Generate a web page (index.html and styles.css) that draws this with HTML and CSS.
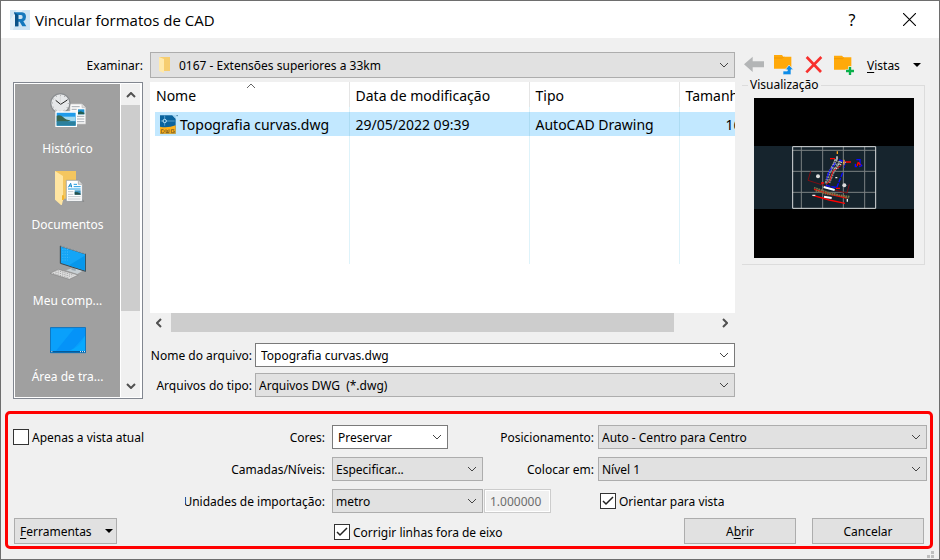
FILE: index.html
```html
<!DOCTYPE html>
<html lang="pt-BR">
<head>
    <meta charset="UTF-8">
    <meta name="viewport" content="width=device-width, initial-scale=1.0">
    <title>Vincular formatos de CAD</title>
    <link rel="stylesheet" href="styles.css">
</head>
<body>
<div class="dialog">
    <header class="titlebar">
        <svg class="app-icon" viewBox="0 0 60 60">
            <rect width="60" height="60" fill="#cfe4f3"/>
            <path d="M0 30L20 0h18L8 60H0z" fill="#e3f0f9"/>
            <path d="M12 7h24q12 1 12 14q0 9-8 13l9 15h-12l-8-14h-4v14H15V15z" fill="#1578bd"/>
            <path d="M25 15h8q5 0 5 6t-5 6h-8z" fill="#cfe4f3"/>
            <path d="M12 7l3 8v34l10 0V15z" fill="#0b5288"/>
        </svg>
        <h1>Vincular formatos de CAD</h1>
        <button class="help" aria-label="Ajuda">?</button>
        <button class="close" aria-label="Fechar">
            <svg viewBox="0 0 12 12"><path d="M0 0l12 12M12 0L0 12"/></svg>
        </button>
    </header>

    <main class="browser">
        <label class="look-label" for="folder">Examinar:</label>
        <select id="folder" class="combo folder-combo">
            <option>0167 - Extensões superiores a 33km</option>
        </select>
        <div class="toolbar">
            <button aria-label="Voltar">
                <svg viewBox="132 165 60 60"><path d="M132 193l26-23v14h34v18h-34v14z" fill="#b3b5b6"/></svg>
            </button>
            <button aria-label="Pasta acima">
                <svg viewBox="222 165 60 60">
                    <path d="M222 165h24l4 5h24v36h-52z" fill="#ffa90a"/>
                    <path d="M222 174h26l4-4" fill="none" stroke="#e99000" stroke-width="2"/>
                    <path d="M249 224v-11h13v-4h-6l11-14 13 14h-7v15z" fill="#0c8ce9" stroke="#f0f0f0" stroke-width="2"/>
                </svg>
            </button>
            <button aria-label="Excluir">
                <svg viewBox="312 165 60 60"><path d="M320 171l43 45M364 171l-45 46" stroke="#f8302d" stroke-width="8"/></svg>
            </button>
            <button aria-label="Nova pasta">
                <svg viewBox="405 165 60 60">
                    <path d="M405 167h24l4 5h24v37h-52z" fill="#ffa90a"/>
                    <path d="M405 176h26l4-4" fill="none" stroke="#e99000" stroke-width="2"/>
                    <path d="M453 199v26M440 213h26" stroke="#f0f0f0" stroke-width="11"/>
                    <path d="M453 201v24M441 213h24" stroke="#0ab04b" stroke-width="7"/>
                </svg>
            </button>
            <button class="views"><span><u>V</u>istas</span><span class="caret"></span></button>
        </div>

        <nav class="places">
            <ul>
                <li><button>
                    <svg viewBox="147 30 108 108">
                        <path d="M207 63h36l11 11v49h-47z" fill="#fafafa" stroke="#c9c9c9" stroke-width="2"/>
                        <path d="M243 63v11h11" fill="#ddd" stroke="#bbb" stroke-width="2"/>
                        <path d="M212 71h24M212 79h15M212 87h15M228 100h22M228 108h22M228 116h22" stroke="#a6adb3" stroke-width="3"/>
                        <path d="M231 79h19v15h-19z" fill="#1c8fd0"/>
                        <path d="M231 88l8-3 11 4v5h-19z" fill="#245d50"/>
                        <circle cx="178" cy="61" r="29" fill="#e6e8ea" stroke="#8a8d90" stroke-width="4"/>
                        <circle cx="178" cy="61" r="24" fill="none" stroke="#777" stroke-width="3" stroke-dasharray="2 10.5"/>
                        <path d="M164 52l15 12 20-13" fill="none" stroke="#222" stroke-width="3"/>
                        <path d="M178 39v26" stroke="#b9b9b9" stroke-width="1"/>
                        <path d="M165 87h61v43h-61z" fill="#1f9bea" stroke="#fff" stroke-width="4"/>
                        <path d="M168 101h55v14h-55z" fill="#a3d9ef"/>
                        <path d="M167 98q12-4 20 5t22 9l-9 4h-33z" fill="#3a6550"/>
                        <path d="M167 115h57v13h-57z" fill="#2c809d"/>
                    </svg>
                    Histórico
                </button></li>
                <li><button>
                    <svg viewBox="147 258 108 108">
                        <path d="M162 264h63v83h-42z" fill="#f4c65f"/>
                        <path d="M162 264l24 15v73l-4 16-20-18z" fill="#ffe5a1"/>
                        <path d="M183 337h6v14h-6z" fill="#f3b52d"/>
                        <path d="M200 356h50l-5-8z" fill="#848484"/>
                        <path d="M196 292h36l12 12v51h-48z" fill="#fff" stroke="#8c9499" stroke-width="2"/>
                        <path d="M232 292v12h12" fill="#ddd" stroke="#999" stroke-width="2"/>
                        <path d="M202 313l7-12 3 12M204 309h8" fill="none" stroke="#1186cc" stroke-width="3"/>
                        <path d="M218 304h10M218 311h21M201 318h38" stroke="#1d9be2" stroke-width="3"/>
                        <path d="M201 326h16M201 334h16M201 341h38M201 348h38" stroke="#a4abb0" stroke-width="2"/>
                        <path d="M221 322h18v13h-18z" fill="#3f94bd"/>
                        <path d="M221 327l9 1 9 4v3h-18z" fill="#244f4a"/>
                    </svg>
                    Documentos
                </button></li>
                <li><button>
                    <svg viewBox="147 36 108 108">
                        <path d="M195 112l22-8 28 9-16 10z" fill="#c8d0d4"/>
                        <path d="M214 100l10 4v10l-13-3z" fill="#9eabb2"/>
                        <path d="M178 39l76 24v52l-76-24z" fill="#14a5f6" stroke="#3a464d" stroke-width="3"/>
                        <path d="M179 39l74 23" stroke="#b9c6cd" stroke-width="2"/>
                        <path d="M204 97l47-29v44z" fill="#0797eb"/>
                        <path d="M184 49h20M184 57h22M184 65h20M184 73h22M184 81h16" stroke="#65c7fb" stroke-width="2" stroke-dasharray="3 4"/>
                        <path d="M147 121l25-12 60 17-27 13z" fill="#dedede" stroke="#858585" stroke-width="2"/>
                        <path d="M156 121l48 14M163 117l48 14M170 113l48 14" stroke="#8b8b8b" stroke-width="2" stroke-dasharray="4 3"/>
                    </svg>
                    Meu comp...
                </button></li>
                <li><button>
                    <svg viewBox="147 264 108 108">
                        <path d="M148 284h106v75H148z" fill="#0aa0fb" stroke="#0870bc" stroke-width="3"/>
                        <path d="M165 353l55-67h32v22l-40 45z" fill="#0593f8"/>
                        <path d="M205 353q35-12 47-45v45z" fill="#07a9ff"/>
                        <path d="M148 356h106" stroke="#075a98" stroke-width="4"/>
                        <path d="M151 356h3M237 356h3M243 356h3M249 356h3" stroke="#fff" stroke-width="3"/>
                    </svg>
                    Área de tra...
                </button></li>
            </ul>
            <div class="vscroll">
                <svg viewBox="0 0 10 6"><path d="M1 5l4-4 4 4"/></svg>
                <span class="thumb"></span>
                <svg viewBox="0 0 10 6"><path d="M1 1l4 4 4-4"/></svg>
            </div>
        </nav>

        <section class="files">
            <div class="file-list">
                <table>
                    <thead>
                        <tr>
                            <th class="col-name">Nome
                                <svg class="sort" viewBox="0 0 10 6"><path d="M1 5l4-4 4 4"/></svg>
                            </th>
                            <th class="col-date">Data de modificação</th>
                            <th class="col-type">Tipo</th>
                            <th class="col-size">Tamanho</th>
                        </tr>
                    </thead>
                    <tbody>
                        <tr class="spacer"><td></td><td></td><td></td><td></td></tr>
                        <tr class="selected">
                            <td>
                                <span class="file-name">
                                    <svg viewBox="0 0 54 57">
                                        <path d="M0 1h37l10 10v45H0z" fill="#0b649e"/>
                                        <path d="M37 1l10 10V1z" fill="#9ed0ed"/>
                                        <path d="M49 2h5" stroke="#4b86a8" stroke-width="3"/>
                                        <path d="M2 18h8M18 18h26M14 2v10M14 23v9" stroke="#79bde4" stroke-width="2"/>
                                        <circle cx="14" cy="18" r="5" fill="none" stroke="#c1e7fc" stroke-width="3"/>
                                        <path d="M0 35q23 5 47-4v25H0z" fill="#ffb11b"/>
                                        <path d="M4 44h6l3 3v3l-3 4H4zM18 43v10h9V43M22 45v8M43 44h-9v9h9v-5h-4" fill="none" stroke="#594b27" stroke-width="2"/>
                                    </svg>
                                    Topografia curvas.dwg
                                </span>
                            </td>
                            <td>29/05/2022 09:39</td>
                            <td>AutoCAD Drawing</td>
                            <td class="size">16 KB</td>
                        </tr>
                        <tr class="filler"><td></td><td></td><td></td><td></td></tr>
                    </tbody>
                </table>
            </div>
            <div class="hscroll">
                <svg viewBox="0 0 6 10"><path d="M5 1L1 5l4 4"/></svg>
                <span class="thumb"></span>
                <svg viewBox="0 0 6 10"><path d="M1 1l4 4-4 4"/></svg>
            </div>
            <div class="file-fields">
                <label for="filename">Nome do arquivo:</label>
                <select id="filename" class="combo editable">
                    <option>Topografia curvas.dwg</option>
                </select>
                <label for="filetype">Arquivos do tipo:</label>
                <select id="filetype" class="combo">
                    <option>Arquivos DWG&nbsp; (*.dwg)</option>
                </select>
            </div>
        </section>

        <fieldset class="preview">
            <legend>Visualização</legend>
            <svg viewBox="42 54 480 480">
                <path d="M42 54h480v480H42z" fill="#000"/>
                <path d="M42 198h480v189H42z" fill="#16242d"/>
                <path d="M184 199v187M248 199v187M310 199v187M374 199v187M157 211h250M157 274h250M157 337h250" stroke="#7b8183" stroke-width="3"/>
                <path d="M158 200h249v185H158z" fill="none" stroke="#d9dcdd" stroke-width="3"/>
                <path d="M212 274l-8 27 50 16M328 313l-7 26-35-8" fill="none" stroke="#7c0d12" stroke-width="3"/>
                <path d="M289 238l-22 42-10 32M303 242l-22 32-14 34" fill="none" stroke="#8d9192" stroke-width="8" stroke-dasharray="6 2"/>
                <path d="M286 249l-20 27-6 22M308 278l-18 45-35-7M297 240l18 5-2 18" fill="none" stroke="#0a0aff" stroke-width="4" stroke-dasharray="14 3"/>
                <path d="M304 256l-25 17-10 31-10 8" fill="none" stroke="#f01010" stroke-width="3"/>
                <path d="M270 236h15M316 246h17M243 309h9M288 325h12M218 346l50 14 47 10M222 328l46 14 52 12" fill="none" stroke="#f00" stroke-width="4"/>
                <path d="M282 240l24 8 12-1M279 252l26 2M274 264l22 2" fill="none" stroke="#d2d2d2" stroke-width="3" stroke-dasharray="4 3"/>
                <path d="M222 323l42 14 32 8 34 5M227 332l30 9 42 5 27 8" fill="none" stroke="#7c7547" stroke-width="5" stroke-dasharray="5 2"/>
                <path d="M251 321l33 9M252 350l23 4" stroke="#fff" stroke-width="6"/>
                <path d="M217 346h9M322 357v8M291 239v-10M286 293h6" stroke="#eee" stroke-width="4"/>
                <circle cx="234" cy="289" r="6" fill="#ddd"/>
                <circle cx="313" cy="316" r="6" fill="#ddd"/>
                <path d="M292 214v8M312 239v15" stroke="#ffa51b" stroke-width="4"/>
                <path d="M349 239h11v12l5 6-8 3M346 251v9h5" fill="none" stroke="#0a0aff" stroke-width="4"/>
                <path d="M355 246l-4 12M356 247l5 9" stroke="#f00" stroke-width="4"/>
            </svg>
        </fieldset>
    </main>

    <section class="options">
        <label class="check"><input type="checkbox">Apenas a vista atual</label>
        <label class="field-label" for="colors">Cores:</label>
        <select id="colors" class="combo editable colors"><option>Preservar</option></select>
        <label class="field-label right" for="position">Posicionamento:</label>
        <select id="position" class="combo"><option>Auto - Centro para Centro</option></select>

        <label class="field-label layers-label" for="layers">Camadas/Níveis:</label>
        <select id="layers" class="combo"><option>Especificar...</option></select>
        <label class="field-label right" for="level">Colocar em:</label>
        <select id="level" class="combo"><option>Nível 1</option></select>

        <label class="field-label units-label" for="units">Unidades de importação:</label>
        <div class="units">
            <select id="units" class="combo"><option>metro</option></select>
            <input type="text" class="factor" value="1.000000" aria-label="Fator" disabled>
        </div>
        <label class="check inset"><input type="checkbox" checked>Orientar para vista</label>

        <button class="btn tools"><span><u>F</u>erramentas</span><span class="caret"></span></button>
        <label class="check inset fix-lines"><input type="checkbox" checked>Corrigir linhas fora de eixo</label>
        <div class="actions">
            <button class="btn"><span>A<u>b</u>rir</span></button>
            <button class="btn">Cancelar</button>
        </div>
    </section>
    <span class="grip"></span>
</div>
</body>
</html>
```
FILE: styles.css
```css
* {
    box-sizing: border-box;
    margin: 0;
    padding: 0;
}

body {
    background: #f0f0f0;
    color: #000;
    font-family: "Noto Sans", "DejaVu Sans Condensed", sans-serif;
    font-size: 12px;
}

button, select, input {
    font: inherit;
    color: inherit;
}

button {
    border: 0;
    background: none;
}

svg {
    display: block;
}

u {
    text-underline-offset: 2px;
}

.dialog {
    position: relative;
    min-height: 100vh;
    border: 1px solid #6e6e6e;
}

/* title bar */
.titlebar {
    display: flex;
    align-items: center;
    height: 37px;
    padding: 0 23px 0 9px;
    background: #fff;
}

.app-icon {
    width: 20px;
    height: 20px;
}

.titlebar h1 {
    flex: 1;
    margin-left: 5px;
    font: 15px "Open Sans", sans-serif;
}

.help {
    width: 20px;
    font: 16px "Noto Sans", sans-serif;
}

.close {
    margin-left: 41px;
}

.close svg {
    width: 13px;
    height: 13px;
    stroke: #000;
}

/* file browser */
.browser {
    display: grid;
    grid-template-columns: 130px minmax(0, 1fr) 183px;
    grid-template-rows: 26px auto;
    gap: 4px 7px;
    padding: 14px 14px 12px 12px;
}

.look-label {
    align-self: center;
    text-align: right;
}

.combo {
    appearance: none;
    width: 100%;
    height: 24px;
    padding: 0 24px 0 3px;
    border: 1px solid #adadad;
    border-radius: 0;
    background: #e1e1e1 url("data:image/svg+xml,%3Csvg xmlns='http://www.w3.org/2000/svg' width='10' height='6'%3E%3Cpath d='M1 1l4 4 4-4' fill='none' stroke='%23444'/%3E%3C/svg%3E") no-repeat right 5px center;
}

.combo.editable {
    padding-left: 5px;
    border-color: #7a7a7a;
    background-color: #fff;
}

.folder-combo {
    height: 26px;
    padding-left: 28px;
    background-image:
        url("data:image/svg+xml,%3Csvg xmlns='http://www.w3.org/2000/svg' width='10' height='6'%3E%3Cpath d='M1 1l4 4 4-4' fill='none' stroke='%23444'/%3E%3C/svg%3E"),
        url("data:image/svg+xml,%3Csvg xmlns='http://www.w3.org/2000/svg' width='12' height='16'%3E%3Cpath d='M0 0h11v14H5z' fill='%23f6cd70'/%3E%3Cpath d='M0 0l5 2v14l-5-2z' fill='%23ffe9ac'/%3E%3C/svg%3E");
    background-position: right 5px center, 8px center;
    background-repeat: no-repeat;
}

.toolbar {
    display: flex;
    align-items: center;
    gap: 10px;
    padding-left: 2px;
}

.toolbar svg {
    width: 20px;
    height: 20px;
}

.toolbar .views {
    display: flex;
    flex: 1;
    align-items: center;
    justify-content: space-between;
    padding: 0 4px 0 3px;
}

.caret {
    border: 4px solid transparent;
    border-top-color: #000;
    border-bottom-width: 0;
}

/* places bar */
.places {
    display: flex;
    gap: 1px;
    padding: 1px 2px 1px 1px;
    border: 1px solid #828790;
    background: #fff;
}

.places ul {
    flex: 1;
    background: #a0a0a0;
    list-style: none;
}

.places button {
    width: 100%;
    height: 76px;
    padding-top: 6px;
    color: #fff;
    line-height: 18px;
}

.places button svg {
    width: 36px;
    height: 36px;
    margin: 0 auto 11px;
}

.vscroll, .hscroll {
    display: flex;
    align-items: center;
    background: #f0f0f0;
}

.vscroll svg, .hscroll svg {
    fill: none;
    stroke: #505050;
    stroke-width: 2;
}

.thumb {
    background: #cdcdcd;
}

.vscroll {
    flex-direction: column;
    width: 19px;
    padding: 8px 0;
}

.vscroll svg {
    width: 10px;
    height: 6px;
}

.vscroll .thumb {
    width: 100%;
    height: 206px;
    margin: 7px 0 auto;
}

/* file list */
.file-list {
    height: 231px;
    padding-left: 5px;
    overflow: hidden;
    background: #fff;
}

.file-list table {
    width: 625px;
    table-layout: fixed;
    border-collapse: collapse;
    font: 14px "Noto Sans", sans-serif;
    white-space: nowrap;
}

.file-list th, .file-list td {
    padding: 0 6px;
    border-left: 1px solid #def3fa;
    text-align: left;
    font-weight: normal;
}

.file-list th {
    height: 25px;
    padding-top: 2px;
    border-color: #e5e5e5;
}

.file-list th:first-child, .file-list td:first-child {
    padding-left: 1px;
    border-left: 0;
}

.col-name {
    position: relative;
    width: 194px;
}

.col-date {
    width: 180px;
}

.col-type {
    width: 150px;
}

.sort {
    position: absolute;
    top: 1px;
    left: 50%;
    width: 10px;
    height: 6px;
    margin-left: -6px;
    fill: none;
    stroke: #666;
}

.spacer td {
    height: 5px;
}

.selected td {
    height: 24px;
    border-color: #addcf3;
    background: #c2e8ff;
}

.file-list .size {
    padding-left: 46px;
}

.file-name {
    display: flex;
    align-items: center;
    gap: 2px;
    padding-left: 4px;
}

.file-name svg {
    width: 18px;
    height: 19px;
}

.filler td {
    height: 128px;
}

.hscroll {
    height: 19px;
    padding: 0 7px 0 6px;
}

.hscroll svg {
    width: 6px;
    height: 10px;
}

.hscroll .thumb {
    width: 88%;
    height: 100%;
    margin: 0 auto 0 9px;
}

.file-fields {
    display: grid;
    grid-template-columns: 102px 1fr;
    gap: 6px 3px;
    align-items: center;
    padding: 11px 0 2px;
}

.file-fields label {
    text-align: right;
    white-space: nowrap;
}

/* preview */
.preview {
    align-self: start;
    padding: 0 10px 6px 12px;
    border: 1px solid #dcdcdc;
    border-left: 0;
    min-width: 0;
    margin-top: -6px;
}

.preview legend {
    margin-left: -6px;
    padding: 0 2px;
    line-height: 18px;
}

.preview svg {
    width: 100%;
    margin-top: 4px;
}

/* import options */
.options {
    display: grid;
    grid-template-columns: 168px 143px 151px 107px minmax(0, 1fr);
    grid-template-rows: 32px 32px 29px 26px;
    column-gap: 4px;
    margin: 0 6px 9px 4px;
    padding: 11px 3px 2px 5px;
    border: 3px solid #f00;
    border-radius: 5px;
}

.check {
    display: flex;
    align-items: center;
    gap: 3px;
    height: 24px;
    white-space: nowrap;
}

.check input {
    appearance: none;
    width: 16px;
    height: 16px;
    border: 1px solid #333;
    background: #fff;
}

.check input:checked {
    background: #fff url("data:image/svg+xml,%3Csvg xmlns='http://www.w3.org/2000/svg' width='12' height='10'%3E%3Cpath d='M1 5l3 3 7-7' fill='none' stroke='%23222' stroke-width='1.5'/%3E%3C/svg%3E") no-repeat center;
}

.check.inset {
    margin-left: 2px;
}

.field-label {
    display: flex;
    align-items: center;
    justify-content: flex-end;
    height: 24px;
    padding-right: 3px;
    overflow: hidden;
    white-space: nowrap;
}

.field-label.right {
    padding-right: 0;
}

.layers-label, .units-label {
    grid-column: 2;
}

.colors {
    width: 116px;
}

.units {
    display: flex;
    grid-column: 3 / 5;
    gap: 1px;
}

.units .combo {
    width: 151px;
}

.factor {
    width: 67px;
    height: 24px;
    padding: 0 5px;
    border: 1px solid #ccc;
    background: #f0f0f0;
    box-shadow: inset 0 0 0 1px #fff;
    color: #6d6d6d;
}

.btn {
    border: 1px solid #adadad;
    background: #e1e1e1;
}

.tools {
    display: flex;
    align-items: center;
    justify-content: space-between;
    width: 103px;
    margin-left: 1px;
    padding: 0 3px 0 5px;
}

.fix-lines {
    grid-column: 3 / 5;
    align-self: end;
}

.actions {
    display: flex;
    justify-content: flex-end;
    gap: 16px;
    padding-right: 3px;
}

.actions .btn {
    width: 112px;
}

.grip {
    position: absolute;
    right: 5px;
    bottom: 1px;
    width: 7px;
    height: 7px;
    background:
        linear-gradient(#bfbfbf, #bfbfbf) 4px 0 / 3px 3px no-repeat,
        linear-gradient(#bfbfbf, #bfbfbf) 0 4px / 3px 3px no-repeat,
        linear-gradient(#bfbfbf, #bfbfbf) 4px 4px / 3px 3px no-repeat;
}
```
